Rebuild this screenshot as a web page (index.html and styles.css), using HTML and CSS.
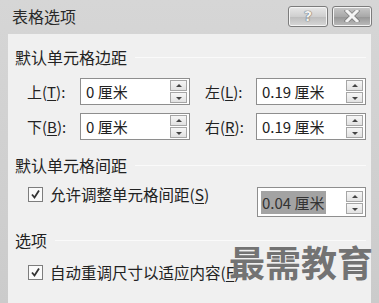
FILE: index.html
```html
<!DOCTYPE html>
<html lang="zh-CN">
<head>
<meta charset="utf-8">
<link rel="stylesheet" href="styles.css">
</head>
<body>
<div class="window">
  <div class="titlebar">
    <span class="title">表格选项</span>
    <div class="tbtns">
      <div class="tbtn">?</div>
      <div class="tbtn close">
        <svg width="16" height="12" viewBox="0 0 16 12"><path d="M3 1 L13 11 M13 1 L3 11" stroke="#5a5a5a" stroke-width="4.6" stroke-linecap="square" opacity="0.5"/><path d="M3 1 L13 11 M13 1 L3 11" stroke="#f4f4f4" stroke-width="3" stroke-linecap="square"/></svg>
      </div>
    </div>
  </div>
  <div class="panel">
    <div class="group-head"><span>默认单元格边距</span><i class="rule"></i></div>
    <div class="grid">
      <label class="lbl">上(<u>T</u>):</label>
      <div class="spin"><span class="val">0 厘米</span><div class="arrows"><b class="up"></b><b class="down"></b></div></div>
      <label class="lbl lbl2">左(<u>L</u>):</label>
      <div class="spin"><span class="val">0.19 厘米</span><div class="arrows"><b class="up"></b><b class="down"></b></div></div>
      <label class="lbl">下(<u>B</u>):</label>
      <div class="spin"><span class="val">0 厘米</span><div class="arrows"><b class="up"></b><b class="down"></b></div></div>
      <label class="lbl lbl2">右(<u>R</u>):</label>
      <div class="spin"><span class="val">0.19 厘米</span><div class="arrows"><b class="up"></b><b class="down"></b></div></div>
    </div>
    <div class="group-head g2"><span>默认单元格间距</span><i class="rule"></i></div>
    <div class="row-check">
      <div class="check-line">
        <span class="cb"><svg width="11" height="11" viewBox="0 0 11 11"><path d="M2 5.5 L4.5 8.5 L9 1.5" stroke="#333" stroke-width="1.8" fill="none"/></svg></span>
        <span class="ctext">允许调整单元格间距(<u>S</u>)</span>
      </div>
      <div class="spin spin-big"><span class="val sel">0.04 厘米</span><div class="arrows"><b class="up"></b><b class="down"></b></div></div>
    </div>
    <div class="group-head g3"><span>选项</span><i class="rule"></i></div>
    <div class="row-check r2">
      <div class="check-line">
        <span class="cb"><svg width="11" height="11" viewBox="0 0 11 11"><path d="M2 5.5 L4.5 8.5 L9 1.5" stroke="#333" stroke-width="1.8" fill="none"/></svg></span>
        <span class="ctext">自动重调尺寸以适应内容(<u>F</u>)</span>
      </div>
    </div>
    <div class="watermark">最需教育</div>
  </div>
</div>
</body>
</html>
```

FILE: styles.css
```css
* { box-sizing: border-box; }
html, body { margin: 0; padding: 0; }
body {
  width: 379px; height: 303px; overflow: hidden;
  font-family: "Noto Sans CJK SC", "Noto Sans", sans-serif;
  color: #222;
  background: #c9c9c9;
}
.window {
  width: 379px; height: 303px;
  background: linear-gradient(#d6d6d6, #cbcbcb);
  display: flex; flex-direction: column;
  overflow: hidden;
}
.titlebar {
  height: 34px; flex: none;
  display: flex; align-items: center; justify-content: space-between;
  padding: 0 7px 0 12px;
}
.title { font-size: 16px; color: #2a2a2a; margin-top: -3px; }
.tbtns { display: flex; gap: 4px; margin-top: -2px; }
.tbtn {
  width: 40px; height: 21px;
  border: 1px solid #7c7c7c; border-radius: 3px;
  background: linear-gradient(#e8e8e8 0%, #cfcfcf 50%, #bcbcbc 51%, #d8d8d8 100%);
  display: flex; align-items: center; justify-content: center;
  font-family: "DejaVu Sans", sans-serif; font-weight: bold; font-size: 14px; color: #f2f2f2;
  text-shadow: 0 0 1px #555, 0 0 1px #555;
  box-shadow: inset 0 0 0 1px #f4f4f4;
}
.tbtn.close { background: linear-gradient(#c8c8c8 0%, #a9a9a9 50%, #959595 51%, #bdbdbd 100%); }
.panel {
  position: relative;
  margin: 0 8px;
  flex: 1; min-height: 0;
  background: #f0f0f0;
  padding: 8px 5px 0 7px;
}
.group-head {
  display: flex; align-items: center; gap: 8px;
  font-size: 16px; color: #222; height: 30px;
}
.rule { flex: 1; height: 1px; background: #d8d8d8; border-bottom: 1px solid #fafafa; margin-top: 1px; }
.grid {
  display: grid;
  grid-template-columns: 65px 110px 66px 110px;
  row-gap: 8px;
  margin-top: 6px;
  align-items: center;
}
.lbl { font-size: 15px; padding-left: 12px; }
.lbl2 { padding-left: 15px; }
u { text-decoration: underline; text-underline-offset: 2px; }
.spin {
  height: 27px;
  border: 1px solid #8e8e8e;
  background: #fff;
  display: flex; align-items: center; justify-content: space-between;
  padding: 0 2px 0 5px;
  font-size: 15px;
}
.arrows { display: flex; flex-direction: column; gap: 1px; }
.arrows b {
  display: block; width: 17px; height: 11px;
  border: 1px solid #a6a6a6;
  background: linear-gradient(#f6f6f6, #e2e2e2);
  position: relative;
}
.arrows b::after {
  content: ""; position: absolute; left: 5px; top: 3px;
  border-left: 3px solid transparent; border-right: 3px solid transparent;
}
.arrows b.up::after { border-bottom: 3px solid #444; }
.arrows b.down::after { border-top: 3px solid #444; top: 4px; }
.g2 { margin-top: 10px; }
.row-check {
  display: flex; align-items: flex-start;
  font-size: 15.5px;
  padding-left: 13px;
  margin-top: 7px;
}
.check-line { display: flex; align-items: center; height: 15px; }
.cb {
  width: 15px; height: 15px; flex: none;
  border: 1px solid #7d7d7d; background: #fafafa;
  display: flex; align-items: center; justify-content: center;
  margin-right: 7px;
}
.ctext { white-space: nowrap; line-height: 15px; }
.spin-big {
  margin-left: auto; width: 109px; height: 30px;
  font-size: 15px;
}
.sel { background: #a3a3a3; color: #333; padding: 0 1px; margin-left: -2px; line-height: 23px; }
.g3 { margin-top: 8px; }
.r2 { margin-top: 10px; }
.watermark {
  position: absolute; left: 221px; top: 209px;
  font-size: 36px; line-height: 1; font-weight: bold; color: #737373;
  white-space: nowrap;
}
```
